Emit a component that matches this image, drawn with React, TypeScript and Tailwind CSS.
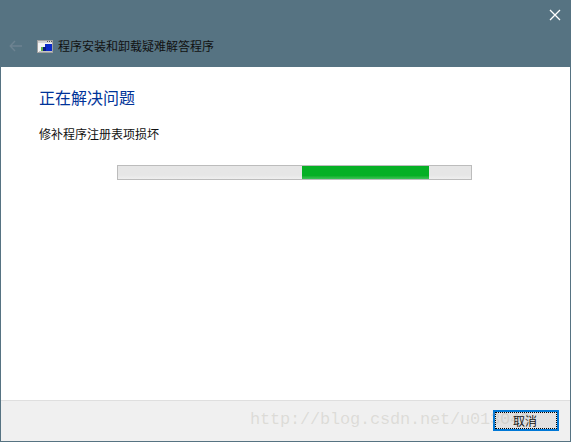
const cjk = "font-['Noto_Sans_CJK_SC','Liberation_Sans',sans-serif]";

function ProgramIcon() {
  return (
    <svg width="16" height="13" viewBox="0 0 16 13" className="shrink-0">
      <rect x="0.5" y="0.5" width="15" height="12" fill="#f4f4f4" stroke="#a0a0a0" strokeWidth="1" />
      <rect x="1" y="1" width="14" height="2" fill="#d4d4d4" />
      <rect x="10" y="1" width="1" height="1" fill="#555" />
      <rect x="12" y="1" width="1" height="1" fill="#555" />
      <rect x="14" y="1" width="1" height="1" fill="#555" />
      <rect x="8" y="4" width="7" height="7" fill="#0a2ac8" />
      <rect x="6" y="7" width="3" height="4" fill="#0a1a80" />
      <rect x="4" y="7" width="2" height="4" fill="#62b048" />
      <rect x="2" y="11" width="13" height="1" fill="#c4c4c4" />
    </svg>
  );
}

function ProgressBar() {
  return (
    <div className="ml-[78px] mt-[23px] h-[15px] w-[355px] border border-[#bcbcbc] bg-gradient-to-b from-[#e6e6e6] from-70% to-[#efefef] pl-[184px]">
      <div className="h-full w-[127px] bg-gradient-to-b from-[#06b025] from-75% to-[#3cc257]" />
    </div>
  );
}

export default function App() {
  return (
    <div className={`relative flex h-[442px] w-[571px] flex-col overflow-hidden border border-[#567382] bg-white ${cjk}`}>
      <div className="flex h-[66px] flex-col bg-[#567382]">
        <div className="flex justify-end pr-[9px] pt-[8px]">
          <svg width="12" height="12" viewBox="0 0 12 12">
            <path d="M1 1L11 11M11 1L1 11" stroke="#fff" strokeWidth="1.3" fill="none" />
          </svg>
        </div>
        <div className="mt-[17px] flex items-center pl-[8px]">
          <svg width="14" height="12" viewBox="0 0 14 12" className="shrink-0">
            <path d="M6 1L1.2 6L6 11M1.2 6H13" stroke="#6d8391" strokeWidth="1.4" fill="none" />
          </svg>
          <div className="ml-[14px] flex">
            <ProgramIcon />
          </div>
          <span className="ml-[5px] text-[12px] leading-[16px] text-[#111]">程序安装和卸载疑难解答程序</span>
        </div>
      </div>

      <div className="flex-1 bg-white pl-[38px]">
        <h1 className="mt-[19px] text-[16px] font-normal leading-[22px] text-[#003399]">正在解决问题</h1>
        <p className="mt-[18px] text-[12px] leading-[16px] text-[#111]">修补程序注册表项损坏</p>
        <ProgressBar />
      </div>

      <div className="flex h-[41px] items-start justify-end border-t border-[#dfdfdf] bg-[#f0f0f0] pr-[11px] pt-[9px]">
        <button
          type="button"
          className="flex h-[21px] w-[66px] items-center justify-center border-2 border-[#0078d7] bg-[#e1e1e1] pr-[2px] text-[12px] leading-none text-[#111] outline-1 outline-offset-[-3px] outline-dotted outline-black"
        >
          取消
        </button>
      </div>

      <span className="pointer-events-none absolute left-[249px] top-[407px] font-['Liberation_Mono',monospace] text-[17px] leading-[24px] tracking-[-0.2px] whitespace-nowrap text-[#a09c8c]/25">
        http://blog.csdn.net/u013043
      </span>
    </div>
  );
}
